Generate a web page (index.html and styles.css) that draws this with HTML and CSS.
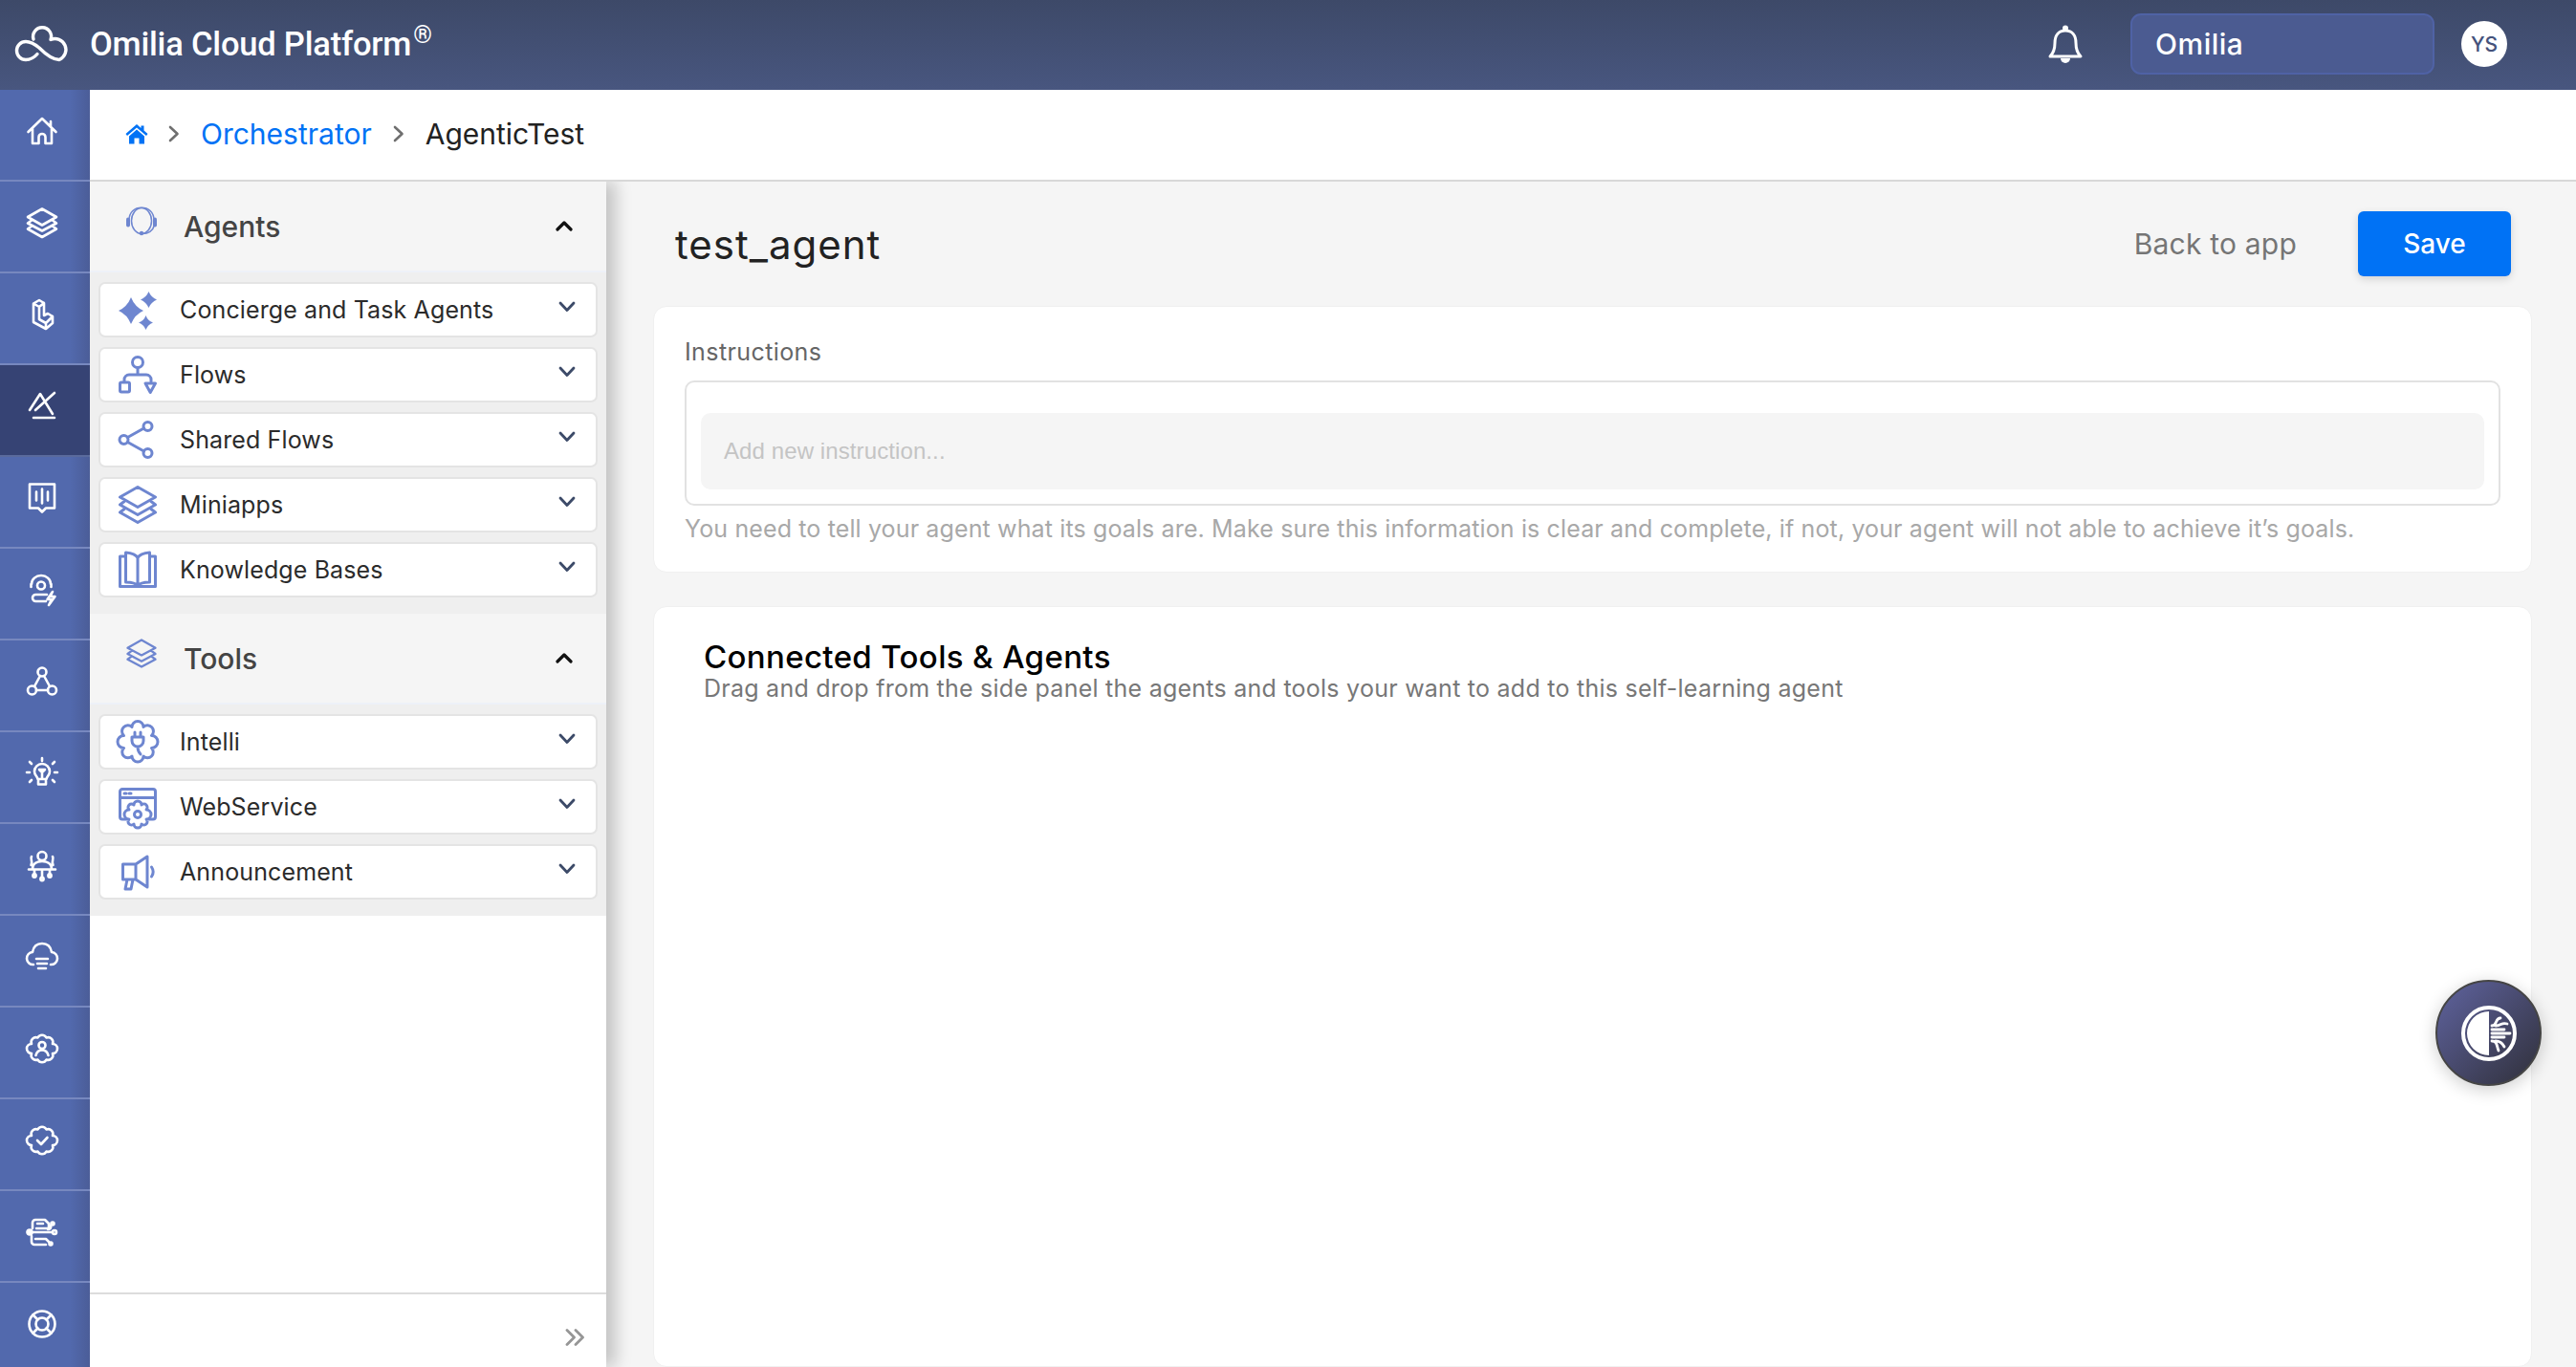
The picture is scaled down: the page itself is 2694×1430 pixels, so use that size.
FILE: index.html
```html
<!DOCTYPE html>
<html lang="en">
<head>
<meta charset="utf-8">
<title>Omilia Cloud Platform</title>
<link rel="stylesheet" href="styles.css">
</head>
<body>
<header class="topbar">
  <svg class="logo" viewBox="0 0 54 38"><path d="M18 14A9.500 9.500 0 1 1 36 14.500A11 11 0 1 1 45 35.500C37 35.500 30 29 24 23C18 18 14 16.500 10 16.500A9.500 9.500 0 0 0 10 35.500C15 35.500 19 33 22 29.500"/></svg>
  <div class="brand">Omilia Cloud Platform<sup class="reg">®</sup></div>
  <div class="top-spacer"></div>
  <svg class="bell" viewBox="0 0 38 40"><path d="M3 33C7 29 8 25 8 19C8 11 12 6 19 6C26 6 30 11 30 19C30 25 31 29 35 33Z"/><circle class="solid" cx="19" cy="3.500" r="3"/><path class="solid" d="M14 35H24A5 5 0 0 1 14 35Z"/></svg>
  <div class="tenant">Omilia</div>
  <div class="avatar">YS</div>
</header>

<div class="shell">
  <nav class="rail">
    <a class="rail-item"><svg viewBox="0 0 32 32"><path d="M1.500 17L16 3L30.500 17M25 6V11M6 13.500V29H12.500V22.500A3.500 3.500 0 0 1 19.500 22.500V29H26V13.500"/></svg></a>
    <a class="rail-item"><svg viewBox="0 0 32 32"><path d="M16 1.500L31 10L16 18.500L1 10ZM5 13.500L1 16.500L16 24.500L31 16.500L27 13.500M5 19.500L1 22.500L16 31L31 22.500L27 19.500"/></svg></a>
    <a class="rail-item"><svg viewBox="0 0 32 32"><path d="M7 4.500L13 1L18 4V17L22 15L27 18V25L20 31L7 24ZM7 4.500L13 8L18 4M13 8V21L20 25V31M13 21L20 25L27 18"/></svg></a>
    <a class="rail-item active"><svg viewBox="0 0 32 32"><path d="M3 20L14 3L27 24M9 20L29 2M7 28H29"/></svg></a>
    <a class="rail-item"><svg viewBox="0 0 32 32"><path d="M3 1.500H29V26.500H20L16 30.500L12 26.500H3ZM10 9.500V18.500M16 6.500V21.500M22 9.500V18.500"/></svg></a>
    <a class="rail-item"><svg viewBox="0 0 32 32"><circle cx="15" cy="11.500" r="4"/><path d="M5 10A10 9 0 0 1 25 10M4.500 10V13M25.500 10V13M21 21H9.500A3.500 3.500 0 0 0 9.500 28H20M27 18L21.500 26H26L23 32L29.500 23H24.500Z"/></svg></a>
    <a class="rail-item"><svg viewBox="0 0 32 32"><circle cx="16" cy="6" r="4.500"/><circle cx="5.500" cy="25" r="4.500"/><circle cx="26.500" cy="25" r="4.500"/><path d="M14 10L8 21M18 10L24 21M10 25H22"/></svg></a>
    <a class="rail-item"><svg viewBox="0 0 32 32"><path d="M11.500 22C11 19 8 18 8 14A8 8 0 0 1 24 14C24 18 21 19 20.500 22ZM12 22V27.500H20V22M13 12H19L16 15ZM16 15V21M16 0V3M3 4L5 6M29 4L27 6M0 15H3M29 15H32M3 25L5 23M29 25L27 23"/></svg></a>
    <a class="rail-item"><svg viewBox="0 0 32 32"><circle cx="16" cy="6.500" r="4.500"/><path d="M6 20C6 14 11 12 16 12C21 12 26 14 26 20M2 20.500H30M16 20.500V28M8 20.500V25M24 20.500V25M5 7C3 10 7 12 4.500 16M27 7C29 10 25 12 27.500 16"/><circle cx="8" cy="27" r="1.600"/><circle cx="24" cy="27" r="1.600"/><circle cx="16" cy="30.500" r="1.600"/></svg></a>
    <a class="rail-item"><svg viewBox="0 0 32 32"><path d="M7 24A6.500 6.500 0 0 1 6 11C7 5 11 2 16 2C21 2 25 5 26 11A6.500 6.500 0 0 1 25 24M10 18H22M11 23H21M12 28H20"/></svg></a>
    <a class="rail-item"><svg viewBox="0 0 32 32"><path d="M20.500 4.500A5 5 0 0 1 27 11A5 5 0 0 1 27 21A5 5 0 0 1 20.500 27.500A5 5 0 0 1 11.500 27.500A5 5 0 0 1 5 21A5 5 0 0 1 5 11A5 5 0 0 1 11.500 4.500A5 5 0 0 1 20.500 4.500Z"/><circle cx="16" cy="12.500" r="3.500"/><path d="M9.500 23C10.500 19 13 17.500 16 17.500C19 17.500 21.500 19 22.500 23"/></svg></a>
    <a class="rail-item"><svg viewBox="0 0 32 32"><path d="M20.500 4.500A5 5 0 0 1 27 11A5 5 0 0 1 27 21A5 5 0 0 1 20.500 27.500A5 5 0 0 1 11.500 27.500A5 5 0 0 1 5 21A5 5 0 0 1 5 11A5 5 0 0 1 11.500 4.500A5 5 0 0 1 20.500 4.500Z"/><path d="M11 16L15 20L21.500 13"/></svg></a>
    <a class="rail-item"><svg viewBox="0 0 32 32"><path d="M6 12V6A3 3 0 0 1 9 3H19L23 7V12H10M11 7H17M25 9C26 12 24 13 22 13M1 16H27M5 20V26A3 3 0 0 0 8 29H20M9 23H20L23 26"/><circle class="solid" cx="3" cy="16" r="2.500"/><circle cx="29" cy="16" r="2"/><circle cx="27" cy="7" r="1.500"/><circle cx="25" cy="28" r="1.500"/></svg></a>
    <a class="rail-item"><svg viewBox="0 0 32 32"><circle cx="16" cy="16" r="13.500"/><circle cx="16" cy="16" r="6.500"/><path d="M6.500 6.500L11.500 11.500M25.500 6.500L20.500 11.500M6.500 25.500L11.500 20.500M25.500 25.500L20.500 20.500"/></svg></a>
  </nav>

  <div class="workspace">
    <div class="crumbs">
      <svg class="crumb-home" viewBox="0 0 24 22"><path d="M12 1L.5 11L2 13L12 4.500L22 13L23.500 11L19.500 7.500V2.500H16.500V5Z"/><path d="M12 6.500L4 13.500V21.500H9.500V15.500H14.500V21.500H20V13.500Z"/></svg>
      <svg class="crumb-sep" viewBox="0 0 12 18"><path d="M2 2L9.500 9L2 16"/></svg>
      <a class="crumb-link">Orchestrator</a>
      <svg class="crumb-sep" viewBox="0 0 12 18"><path d="M2 2L9.500 9L2 16"/></svg>
      <span class="crumb-current">AgenticTest</span>
    </div>

    <div class="stage">
      <aside class="panel">
        <div class="group-head">
          <svg class="group-icon thin" viewBox="0 0 32 30"><ellipse cx="16" cy="14.500" rx="10.500" ry="13.500"/><path d="M3 14C3 5 9 .8 16 .8C23 .8 29 5 29 14M29 20C28 25 23 28 17 28"/><rect class="fill" x="0" y="11" width="4" height="10" rx="2"/><rect class="fill" x="28" y="11" width="4" height="10" rx="2"/><circle class="fill" cx="16" cy="27.500" r="2.200"/></svg>
          <span class="group-title">Agents</span>
          <svg class="caret" viewBox="0 0 18 12"><path d="M2 10L9 3L16 10"/></svg>
        </div>
        <div class="group-body">
          <div class="row">
            <svg class="row-icon" viewBox="0 0 40 40"><path class="fill" d="M13 7Q17 17 26 21Q17 25 13 35Q9 25 0 21Q9 17 13 7Z"/><path class="fill" d="M31.500 1Q34 7 40 9.500Q34 12 31.500 18Q29 12 23 9.500Q29 7 31.500 1Z"/><path class="fill" d="M28.500 26Q30.500 31.500 36 33.500Q30.500 35.500 28.500 41Q26.500 35.500 21 33.500Q26.500 31.500 28.500 26Z"/></svg>
            <span class="row-label">Concierge and Task Agents</span>
            <svg class="chev" viewBox="0 0 18 12"><path d="M2 2L9 9.500L16 2"/></svg>
          </div>
          <div class="row">
            <svg class="row-icon" viewBox="0 0 40 40"><circle cx="20" cy="7" r="5.500"/><path d="M20 13V20M6 27V25A5 5 0 0 1 11 20H29A5 5 0 0 1 34 25V27"/><rect x="1.500" y="28" width="10" height="10" rx="1.500"/><path d="M28 29H38.500L33.200 38.500Z"/></svg>
            <span class="row-label">Flows</span>
            <svg class="chev" viewBox="0 0 18 12"><path d="M2 2L9 9.500L16 2"/></svg>
          </div>
          <div class="row">
            <svg class="row-icon" viewBox="0 0 40 40"><circle cx="5.500" cy="20" r="4.500"/><circle cx="30.500" cy="6" r="4.500"/><circle cx="30.500" cy="34" r="4.500"/><path d="M9.500 17.500L26.500 8M9.500 22.500L26.500 32"/></svg>
            <span class="row-label">Shared Flows</span>
            <svg class="chev" viewBox="0 0 18 12"><path d="M2 2L9 9.500L16 2"/></svg>
          </div>
          <div class="row">
            <svg class="row-icon" viewBox="0 0 40 40"><path d="M20 1.500L38.500 12L20 22.500L1.500 12ZM6 16.500L1.500 20L20 30.500L38.500 20L34 16.500M6 24.500L1.500 28L20 38.500L38.500 28L34 24.500"/></svg>
            <span class="row-label">Miniapps</span>
            <svg class="chev" viewBox="0 0 18 12"><path d="M2 2L9 9.500L16 2"/></svg>
          </div>
          <div class="row">
            <svg class="row-icon" viewBox="0 0 40 40"><path d="M7 6H1.500V37.500H38.500V6H33M7.500 33V2C14 2.500 18 4 20 7.500C22 4 26 2.500 32.500 2V33C26 33 22 34 20 37C18 34 14 33 7.500 33ZM20 7.500V36"/></svg>
            <span class="row-label">Knowledge Bases</span>
            <svg class="chev" viewBox="0 0 18 12"><path d="M2 2L9 9.500L16 2"/></svg>
          </div>
        </div>

        <div class="group-head">
          <svg class="group-icon" viewBox="0 0 32 32"><path d="M16 1.500L31 10L16 18L1 10ZM5 13.500L1 16.500L16 24.500L31 16.500L27 13.500M5 19.500L1 22.500L16 30.500L31 22.500L27 19.500"/></svg>
          <span class="group-title">Tools</span>
          <svg class="caret" viewBox="0 0 18 12"><path d="M2 10L9 3L16 10"/></svg>
        </div>
        <div class="group-body">
          <div class="row">
            <svg class="row-icon" viewBox="0 0 40 40"><path d="M26 4.500A6 6 0 0 1 34.500 13.500A6 6 0 0 1 34.500 26.500A6 6 0 0 1 26 35A6 6 0 0 1 14 35A6 6 0 0 1 5.500 26.500A6 6 0 0 1 5.500 13.500A6 6 0 0 1 14 4.500A6 6 0 0 1 26 4.500Z"/><path d="M17 10V15M23 10V15M14 15H26V19A6 6 0 0 1 14 19ZM20 25C20 29 21 31 23 33"/></svg>
            <span class="row-label">Intelli</span>
            <svg class="chev" viewBox="0 0 18 12"><path d="M2 2L9 9.500L16 2"/></svg>
          </div>
          <div class="row">
            <svg class="row-icon" viewBox="0 0 40 40"><path d="M8 33H4A2.500 2.500 0 0 1 1.500 30.500V4A2.500 2.500 0 0 1 4 1.500H36A2.500 2.500 0 0 1 38.500 4V30.500A2.500 2.500 0 0 1 36 33H32M1.500 10.500H38.500M6 6H8M11 6H13"/><circle cx="20" cy="28" r="3.500"/><path d="M24 18A3.300 3.300 0 0 1 29 23A3.300 3.300 0 0 1 29 33A3.300 3.300 0 0 1 24 38A3.300 3.300 0 0 1 16 38A3.300 3.300 0 0 1 11 33A3.300 3.300 0 0 1 11 23A3.300 3.300 0 0 1 16 18A3.300 3.300 0 0 1 24 18Z"/></svg>
            <span class="row-label">WebService</span>
            <svg class="chev" viewBox="0 0 18 12"><path d="M2 2L9 9.500L16 2"/></svg>
          </div>
          <div class="row">
            <svg class="row-icon" viewBox="0 0 40 40"><path d="M4.500 12H18V28H4.500ZM18 12L30 4V36L18 28M34.500 15C36.500 18 36.500 22 34.500 25M9 28L7 38H13L15 28"/></svg>
            <span class="row-label">Announcement</span>
            <svg class="chev" viewBox="0 0 18 12"><path d="M2 2L9 9.500L16 2"/></svg>
          </div>
        </div>

        <div class="panel-fill"></div>
        <div class="panel-foot">
          <svg class="collapse" viewBox="0 0 22 18"><path d="M2 1.500L9.500 9L2 16.500M11 1.500L18.500 9L11 16.500"/></svg>
        </div>
      </aside>

      <main class="content">
        <div class="title-row">
          <h1 class="page-title">test_agent</h1>
          <a class="back">Back to app</a>
          <button class="save">Save</button>
        </div>
        <section class="card card-instructions">
          <div class="field-label">Instructions</div>
          <div class="field-box">
            <div class="field-input">Add new instruction...</div>
          </div>
          <div class="field-help">You need to tell your agent what its goals are. Make sure this information is clear and complete, if not, your agent will not able to achieve it’s goals.</div>
        </section>
        <section class="card card-tools">
          <h2 class="tools-title">Connected Tools &amp; Agents</h2>
          <div class="tools-sub">Drag and drop from the side panel the agents and tools your want to add to this self-learning agent</div>
        </section>
      </main>
    </div>
  </div>
</div>

<button class="assistant" aria-label="Assistant">
  <svg viewBox="0 0 60 60"><circle cx="30" cy="30" r="27" class="ring"/><path class="half" d="M30 7A23 23 0 0 0 30 53Z"/><path class="wire" d="M33 26H46M33 30H52M33 34H46M33 22C39 22 36 14 42 14M37 22C43 22 43 18 49 20M33 38C39 38 38 44 40 48M37 38C42 38 44 40 46 44"/></svg>
</button>
</body>
</html>
```
FILE: styles.css
```css
* { box-sizing: border-box; }
html, body { margin: 0; height: 100%; }
body {
  width: 2694px;
  height: 1430px;
  overflow: hidden;
  display: flex;
  flex-direction: column;
  background: #f5f5f5;
  font-family: "Inter", "Liberation Sans", sans-serif;
  color: #222;
}
svg { fill: none; stroke-linecap: round; stroke-linejoin: round; flex: none; display: block; }

.topbar {
  flex: none;
  height: 94px;
  display: flex;
  align-items: center;
  padding: 0 72px 2px 17px;
  background: linear-gradient(180deg, #3d4968, #48567f);
  color: #fff;
  box-shadow: 0 4px 16px rgba(0, 0, 0, .16);
  position: relative;
  z-index: 3;
}
.logo { width: 54px; height: 38px; stroke: #fff; stroke-width: 3.400; margin-right: 23px; overflow: visible; }
.brand { font-family: "Roboto", sans-serif; font-weight: 500; font-size: 34.500px; letter-spacing: -.2px; }
.reg { font-size: 25px; font-weight: 400; vertical-align: 13px; line-height: 0; margin-left: 2px; }
.top-spacer { flex: 1; }
.bell { width: 38px; height: 40px; stroke: #fff; stroke-width: 3; margin-right: 49px; }
.bell .solid { fill: #fff; stroke: none; }
.tenant {
  width: 318px;
  height: 64px;
  display: flex;
  align-items: center;
  padding-left: 24px;
  background: #4b5b91;
  border: 2px solid #4f62a5;
  border-radius: 11px;
  font-size: 30px;
  font-weight: 500;
  letter-spacing: .5px;
  margin-right: 28px;
}
.avatar {
  width: 48px;
  height: 48px;
  border-radius: 50%;
  background: #fff;
  color: #45527c;
  display: flex;
  align-items: center;
  justify-content: center;
  font-size: 21px;
  font-weight: 500;
}

.shell { flex: 1; display: flex; min-height: 0; }

.rail {
  flex: none;
  width: 94px;
  display: flex;
  flex-direction: column;
  overflow: hidden;
  position: relative;
  z-index: 4;
}
.rail-item {
  flex: none;
  height: 96px;
  display: flex;
  justify-content: center;
  align-items: center;
  padding: 0 6px 8px 0;
  border-bottom: 2px solid #7788bf;
  background: linear-gradient(90deg, #5269ad 0, #5269ad 78%, #4b5d98 100%);
}
.rail-item svg { width: 32px; height: 32px; stroke: #fff; stroke-width: 2.600; overflow: visible; }
.rail-item svg .solid { fill: #fff; }
.rail-item.active { background: #364374; border-bottom-color: #5a6a9c; }

.workspace { flex: 1; min-width: 0; display: flex; flex-direction: column; }

.crumbs {
  flex: none;
  height: 96px;
  display: flex;
  align-items: center;
  padding: 0 0 2px 37px;
  background: #fff;
  border-bottom: 2px solid #d8d8d8;
  font-size: 30px;
  position: relative;
  z-index: 3;
}
.crumb-home { width: 24px; height: 22px; fill: #0072f5; margin-right: 21px; }
.crumb-sep { width: 12px; height: 18px; stroke: #6f6f6f; stroke-width: 2.600; margin-right: 22px; }
.crumb-link { color: #0072f5; margin-right: 22px; }
.crumb-current { color: #222; }

.stage { flex: 1; display: flex; min-height: 0; }

.panel {
  flex: none;
  width: 540px;
  display: flex;
  flex-direction: column;
  background: #fff;
  box-shadow: 10px 0 16px rgba(0, 0, 0, .2);
  position: relative;
  z-index: 2;
}
.group-head {
  flex: none;
  height: 95px;
  display: flex;
  align-items: center;
  padding: 0 35px 0 38px;
  background: #f5f5f5;
  border-bottom: 2px solid #eef1f8;
}
.group-icon { width: 32px; height: 31px; stroke: #6e86d0; stroke-width: 2.400; margin: -10px 28px 0 0; overflow: visible; }
.group-icon.thin { stroke-width: 1.500; }
.group-icon .fill { fill: #6e86d0; stroke: none; }
.group-title { flex: 1; font-size: 30px; font-weight: 500; color: #444; }
.caret { width: 18px; height: 12px; stroke: #111; stroke-width: 3.200; margin-top: -1px; }

.group-body {
  flex: none;
  display: flex;
  flex-direction: column;
  gap: 10px;
  padding: 10px 9px 17px;
  background: #efefef;
}
.row {
  height: 58px;
  display: flex;
  align-items: center;
  padding: 0 21px 0 19px;
  background: #fff;
  border: 2px solid #e4e4e4;
  border-radius: 7px;
}
.row-icon { width: 40px; height: 40px; stroke: #6e86d0; stroke-width: 3; overflow: visible; }
.row-icon .fill { fill: #6e86d0; stroke: none; }
.row-label { flex: 1; margin-left: 24px; font-size: 25px; letter-spacing: .12px; color: #2b2b2b; }
.chev { width: 18px; height: 12px; stroke: #3c4a68; stroke-width: 2.800; margin-top: -7px; }

.panel-fill { flex: 1; }
.panel-foot {
  flex: none;
  height: 78px;
  display: flex;
  align-items: center;
  justify-content: flex-end;
  padding: 14px 21px 0 0;
  border-top: 2px solid #dcdcdc;
}
.collapse { width: 22px; height: 18px; stroke: #969696; stroke-width: 2.800; }

.content {
  flex: 1;
  min-width: 0;
  display: flex;
  flex-direction: column;
  padding: 0 46px 0 49px;
  background: #f5f5f5;
}
.title-row {
  flex: none;
  height: 130px;
  display: flex;
  align-items: center;
  padding: 0 22px 0 23px;
}
.page-title { flex: 1; margin: 0; font-size: 42px; font-weight: 400; letter-spacing: 1px; color: #222; }
.back { font-size: 30px; letter-spacing: .2px; color: #757575; margin-right: 64px; }
.save {
  width: 160px;
  height: 68px;
  border: 0;
  border-radius: 6px;
  background: #0072f5;
  color: #fff;
  font: 500 28px "Inter", sans-serif;
  box-shadow: 0 3px 8px rgba(0, 0, 0, .14);
}

.card { background: #fff; border: 1px solid #f0f0f0; border-radius: 14px; }
.card-instructions { flex: none; height: 279px; padding: 32px 32px 0; }
.field-label { height: 30px; line-height: 30px; font-size: 25px; letter-spacing: .4px; color: #666; margin-bottom: 15px; }
.field-box { height: 131px; padding: 32px 15px 15px; border: 2px solid #e2e2e2; border-radius: 10px; }
.field-input {
  height: 80px;
  display: flex;
  align-items: center;
  padding-left: 24px;
  background: #f5f5f5;
  border-radius: 10px;
  font-family: "Liberation Sans", sans-serif;
  font-size: 24px;
  letter-spacing: .1px;
  color: #c4c4c4;
}
.field-help { height: 30px; line-height: 30px; margin-top: 9px; font-size: 25px; letter-spacing: .13px; color: #a8a8a8; white-space: nowrap; }

.card-tools { flex: 1; margin-top: 35px; padding: 33px 52px 0; }
.tools-title { margin: 0; height: 38px; line-height: 38px; font-size: 33px; letter-spacing: .35px; font-weight: 500; color: #000; }
.tools-sub { height: 28px; line-height: 28px; font-size: 25px; letter-spacing: .25px; color: #777; white-space: nowrap; }

.assistant {
  position: absolute;
  left: 2547px;
  top: 1025px;
  width: 111px;
  height: 111px;
  padding: 0;
  display: flex;
  align-items: center;
  justify-content: center;
  border: 2px solid #454545;
  border-radius: 50%;
  background: linear-gradient(135deg, #5f639f, #30303a);
  box-shadow: 0 4px 18px rgba(0, 0, 0, .2);
}
.assistant svg { width: 60px; height: 60px; }
.assistant .ring { stroke: #fff; stroke-width: 4; }
.assistant .half { fill: #fff; }
.assistant .wire { stroke: #fff; stroke-width: 2.800; }
```
